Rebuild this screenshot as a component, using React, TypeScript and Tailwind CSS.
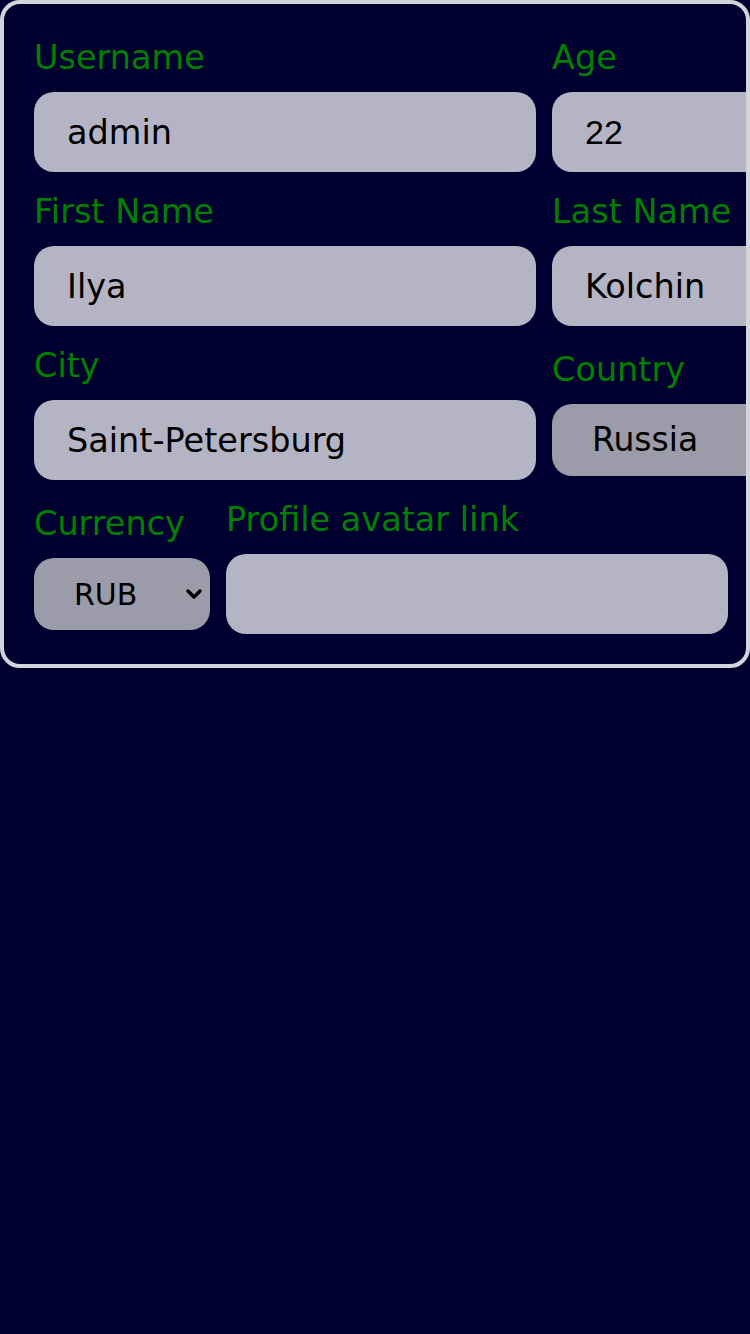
import React from "react";

const labelCls = "block text-[33.5px] leading-[48px] mb-[10px] text-[#008000] whitespace-nowrap";
const inputCls =
  "block h-20 w-full rounded-[20px] bg-[#b4b4c4] px-[33px] text-[33.5px] text-black outline-none";
const selectCls =
  "block h-[72px] w-full appearance-none rounded-[20px] bg-[#9c9ba9] pl-[40px] pr-[30px] text-black outline-none";

interface FieldProps {
  label: string;
  value: string;
  width?: string;
  numeric?: boolean;
}

function Field({ label, value, width = "w-[502px]", numeric }: FieldProps) {
  return (
    <div className={`flex shrink-0 flex-col ${width}`}>
      <label className={labelCls}>{label}</label>
      <input
        type={numeric ? "number" : "text"}
        defaultValue={value}
        className={
          numeric
            ? "block h-20 w-full rounded-[20px] bg-[#b4b4c4] px-[33px] font-['Liberation_Sans',sans-serif] text-[34px] text-black outline-none"
            : inputCls
        }
      />
    </div>
  );
}

function Chevron() {
  return (
    <svg
      viewBox="0 0 18 12"
      className="pointer-events-none absolute right-[7px] top-1/2 h-[12px] w-[18px] -translate-y-1/2"
    >
      <path d="M3 3 L9 9 L15 3" fill="none" stroke="black" strokeWidth="3.5" strokeLinecap="round" strokeLinejoin="round" />
    </svg>
  );
}

interface SelectFieldProps {
  label: string;
  value: string;
  options: string[];
  width: string;
  size: string;
}

function SelectField({ label, value, options, width, size }: SelectFieldProps) {
  return (
    <div className={`flex shrink-0 flex-col ${width}`}>
      <label className={labelCls}>{label}</label>
      <div className="relative">
        <select defaultValue={value} className={`${selectCls} ${size}`}>
          {options.map((o) => (
            <option key={o}>{o}</option>
          ))}
        </select>
        <Chevron />
      </div>
    </div>
  );
}

export default function App() {
  return (
    <div className="min-h-[1334px] bg-[#000030] font-['DejaVu_Sans',sans-serif]">
      <div className="flex flex-col gap-4 overflow-hidden rounded-[20px] border-4 border-[#d4d4dc] p-[30px]">
        <div className="flex items-center gap-4">
          <Field label="Username" value="admin" />
          <Field label="Age" value="22" numeric />
        </div>
        <div className="flex items-center gap-4">
          <Field label="First Name" value="Ilya" />
          <Field label="Last Name" value="Kolchin" />
        </div>
        <div className="flex items-center gap-4">
          <Field label="City" value="Saint-Petersburg" />
          <SelectField
            label="Country"
            value="Russia"
            options={["Russia", "Belarus", "Kazakhstan"]}
            width="w-[502px]"
            size="text-[33px]"
          />
        </div>
        <div className="flex items-center gap-4">
          <SelectField
            label="Currency"
            value="RUB"
            options={["RUB", "USD", "EUR"]}
            width="w-[176px]"
            size="text-[30px]"
          />
          <Field label="Profile avatar link" value="" />
        </div>
      </div>
    </div>
  );
}
